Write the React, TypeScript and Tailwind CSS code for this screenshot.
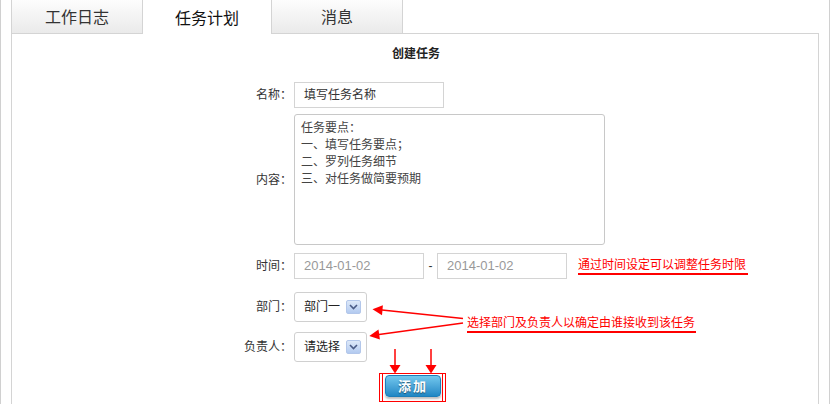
import React from "react";

const Label = ({ children }: { children: React.ReactNode }) => (
  <div className="w-[280px] shrink-0 text-right text-[12px] leading-[16px] text-[#333]">{children}</div>
);

const Select = ({ text }: { text: string }) => (
  <div className="ml-[2px] w-[73px] h-[30px] border border-[#d0d0d0] rounded-[3px] flex items-center pl-[9px] bg-white">
    <span className="text-[12px] leading-[16px] text-[#222]">{text}</span>
    <div className="ml-auto mr-[5px] w-[15px] h-[14px] rounded-[2px] border border-[#b3c7ea] bg-gradient-to-b from-[#dde8f8] to-[#b3caf0] flex items-center justify-center">
      <svg width="9" height="6" viewBox="0 0 9 6">
        <path d="M1 1 L4.5 4.5 L8 1" fill="none" stroke="#4a5b85" strokeWidth="1.6" />
      </svg>
    </div>
  </div>
);

export default function App() {
  return (
    <div className="relative w-[830px] h-[404px] bg-white overflow-hidden border-x border-[#d0d0d0] font-['Liberation_Sans','Noto_Sans_CJK_SC',sans-serif]">
      <div className="mx-[10px] h-full flex flex-col">
        {/* tabs */}
        <div className="flex h-[34px] shrink-0">
          <div className="w-[132px] h-[34px] border-x border-b border-[#d4d4d4] bg-gradient-to-b from-[#fdfdfd] to-[#eaeaea] flex items-center justify-center pb-[1px] text-[16px] text-[#333] font-['Noto_Sans_CJK_SC',sans-serif]">
            工作日志
          </div>
          <div className="w-[128px] h-[34px] bg-white flex items-center justify-center pb-[1px] text-[16px] text-[#111] font-['Noto_Sans_CJK_SC',sans-serif]">
            任务计划
          </div>
          <div className="w-[132px] h-[34px] border-x border-b border-[#d4d4d4] bg-gradient-to-b from-[#fdfdfd] to-[#eaeaea] flex items-center justify-center pb-[1px] text-[16px] text-[#333] font-['Noto_Sans_CJK_SC',sans-serif]">
            消息
          </div>
          <div className="flex-1 border-b border-[#d4d4d4]" />
        </div>

        {/* panel */}
        <div className="flex-1 border-x border-[#d4d4d4] pt-[12px]">
          <div className="text-center text-[12px] leading-[16px] font-bold text-[#222] pl-[2px]">创建任务</div>

          {/* name */}
          <div className="flex items-center mt-[20px]">
            <Label>名称：</Label>
            <div className="ml-[2px] w-[150px] h-[26px] border border-[#d4d4d4] flex items-center pl-[9px] text-[12px] text-[#333]">
              填写任务名称
            </div>
          </div>

          {/* content */}
          <div className="flex items-center mt-[6px]">
            <Label>内容：</Label>
            <div className="ml-[2px] w-[311px] h-[131px] border border-[#c8c8c8] rounded-[3px] pl-[6px] pt-[5px] text-[12px] leading-[17px] text-[#444]">
              <div>任务要点：</div>
              <div>一、填写任务要点；</div>
              <div>二、罗列任务细节</div>
              <div>三、对任务做简要预期</div>
            </div>
          </div>

          {/* time */}
          <div className="flex items-center mt-[8px]">
            <Label>时间：</Label>
            <div className="ml-[2px] w-[130px] h-[26px] border border-[#d4d4d4] flex items-center pl-[9px] text-[13px] text-[#999]">
              2014-01-02
            </div>
            <div className="w-[13px] text-center text-[12px] text-[#333]">-</div>
            <div className="w-[130px] h-[26px] border border-[#d4d4d4] flex items-center pl-[9px] text-[13px] text-[#999]">
              2014-01-02
            </div>
            <span className="ml-[11px] text-[12px] leading-[16px] text-[#ff0000] border-b-2 border-[#ff0000] pr-[2px]">
              通过时间设定可以调整任务时限
            </span>
          </div>

          {/* dept */}
          <div className="flex items-center mt-[13px]">
            <Label>部门：</Label>
            <Select text="部门一" />
          </div>

          {/* owner */}
          <div className="flex items-center mt-[10px]">
            <Label>负责人：</Label>
            <Select text="请选择" />
          </div>

          {/* button */}
          <div className="flex mt-[11px]">
            <div className="ml-[367px] w-[67px] h-[29px] border border-[#ff0000] flex">
              <div className="mx-[2px] flex-1 border-x border-[#ff0000]">
                <div className="ml-[2px] mt-[1px] w-[56px] h-[22px] rounded-[4px] border border-[#1d7db8] bg-gradient-to-b from-[#72c8ee] to-[#1f87c4] shadow-[0_2px_2px_rgba(0,0,0,0.25)] flex items-center justify-center text-[13px] font-bold text-white tracking-[2px] [text-shadow:0_1px_1px_rgba(0,0,0,0.45)] font-['Noto_Sans_CJK_SC',sans-serif]">
                  添加
                </div>
              </div>
            </div>
          </div>
        </div>
      </div>

      {/* annotation callout */}
      <div className="absolute left-[466px] top-[315px] text-[12px] leading-[16px] text-[#ff0000] border-b-2 border-[#ff0000] pr-[1px]">
        选择部门及负责人以确定由谁接收到该任务
      </div>

      <svg className="absolute inset-0 pointer-events-none" width="830" height="404" viewBox="0 0 830 404">
        <line x1="462" y1="318.5" x2="381" y2="310" stroke="#ff0000" strokeWidth="1.5" />
        <polygon points="371.5,309.3 381.9,305.3 381,315.3" fill="#ff0000" />
        <line x1="462" y1="323" x2="378" y2="334.6" stroke="#ff0000" strokeWidth="1.5" />
        <polygon points="368.3,336 378.9,339.6 377.5,329.6" fill="#ff0000" />
        <line x1="394" y1="349" x2="394" y2="366" stroke="#ff0000" strokeWidth="1.5" />
        <polygon points="388.5,365 399.5,365 394,373.5" fill="#ff0000" />
        <line x1="430" y1="349" x2="430" y2="366" stroke="#ff0000" strokeWidth="1.5" />
        <polygon points="424.5,365 435.5,365 430,373.5" fill="#ff0000" />
      </svg>
    </div>
  );
}
